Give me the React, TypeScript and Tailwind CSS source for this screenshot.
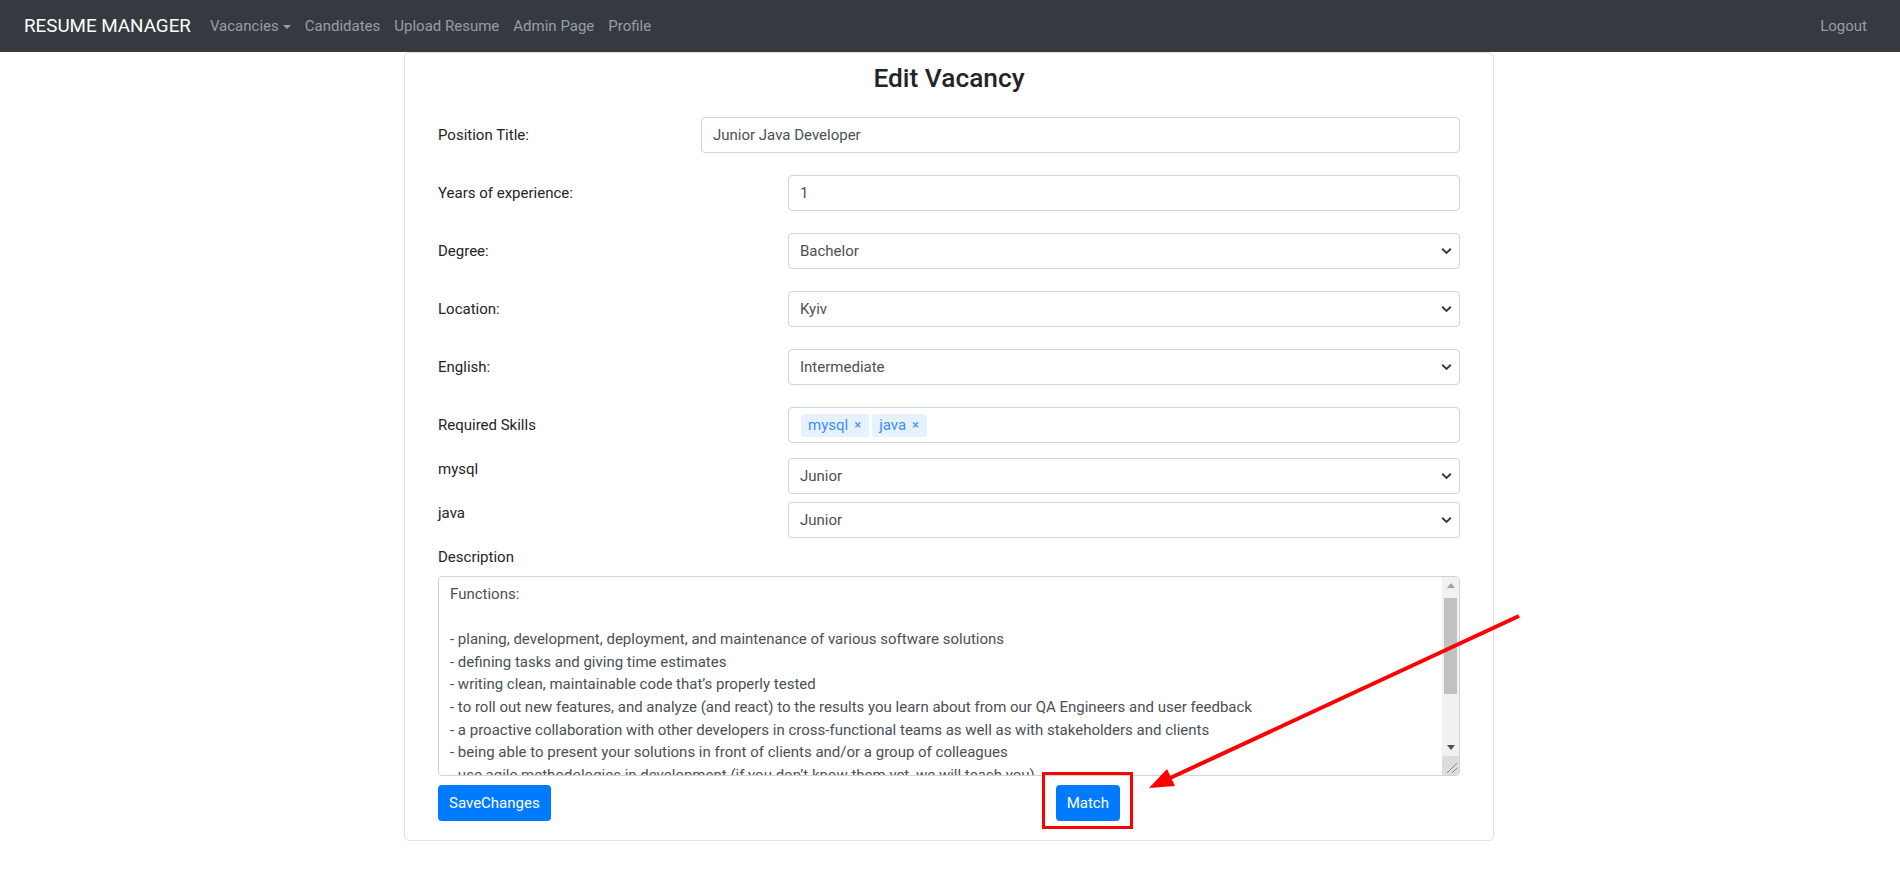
import React from "react";

const FONT = "font-['Roboto','Liberation_Sans',sans-serif]";

const DESCRIPTION = [
  "Functions:",
  "",
  "- planing, development, deployment, and maintenance of various software solutions",
  "- defining tasks and giving time estimates",
  "- writing clean, maintainable code that’s properly tested",
  "- to roll out new features, and analyze (and react) to the results you learn about from our QA Engineers and user feedback",
  "- a proactive collaboration with other developers in cross-functional teams as well as with stakeholders and clients",
  "- being able to present your solutions in front of clients and/or a group of colleagues",
  "- use agile methodologies in development (if you don’t know them yet, we will teach you)",
];

function Chevron() {
  return (
    <svg width="11" height="7" viewBox="0 0 11 7" className="absolute right-[7px] top-1/2 -translate-y-1/2">
      <path d="M1.2 1.2 L5.5 5.4 L9.8 1.2" fill="none" stroke="#343a40" strokeWidth="2" />
    </svg>
  );
}

function TextBox({ value, select }: { value: string; select?: boolean }) {
  return (
    <div className="relative flex-1 h-[36px] border border-[#ced4da] rounded-[4px] bg-white flex items-center pl-[11px] text-[#495057]">
      {value}
      {select && <Chevron />}
    </div>
  );
}

function Row({
  label,
  labelW,
  children,
  top,
  className = "",
}: {
  label: string;
  labelW: string;
  children: React.ReactNode;
  top?: boolean;
  className?: string;
}) {
  return (
    <div className={`flex ${top ? "items-start" : "items-center"} ${className}`}>
      <div className={`${labelW} shrink-0 text-[#212529] ${top ? "leading-[22px]" : ""}`}>{label}</div>
      {children}
    </div>
  );
}

function Tag({ name }: { name: string }) {
  return (
    <span className="h-[23px] flex items-center gap-[6px] pl-[7px] pr-[8px] rounded-[3px] bg-[#e6f2ff] text-[#3a8ef6]">
      {name}
      <span className="text-[13px]">×</span>
    </span>
  );
}

function ScrollBar() {
  return (
    <div className="w-[17px] flex flex-col bg-[#f1f1f1] shrink-0">
      <div className="h-[17px] flex items-center justify-center">
        <svg width="8" height="5" viewBox="0 0 8 5"><path d="M0 5 L4 0 L8 5 Z" fill="#a3a3a3" /></svg>
      </div>
      <div className="h-[96px] mx-[2px] mt-[4px] bg-[#c1c1c1]" />
      <div className="flex-1" />
      <div className="h-[17px] flex items-center justify-center">
        <svg width="8" height="5" viewBox="0 0 8 5"><path d="M0 0 L8 0 L4 5 Z" fill="#505050" /></svg>
      </div>
      <div className="h-[19px] bg-[#dcdcdc] relative">
        <svg width="17" height="19" viewBox="0 0 17 19" className="absolute inset-0">
          <path d="M5 17 L15 7 M10 17 L15 12" stroke="#8a8a8a" strokeWidth="1" />
        </svg>
      </div>
    </div>
  );
}

export default function App() {
  return (
    <div className={`relative min-h-[879px] bg-white text-[15px] ${FONT}`}>
      {/* Navbar */}
      <nav className="h-[52px] bg-[#343a40] flex items-center pl-[24px] pr-[26px]">
        <span className="text-[18.8px] text-white mr-[12px]">RESUME MANAGER</span>
        <div className="flex items-center text-[#9a9da0]">
          <span className="px-[7px] flex items-center">
            Vacancies
            <span className="ml-[4px] mt-[1px] w-0 h-0 border-l-[4.25px] border-r-[4.25px] border-t-[4.5px] border-l-transparent border-r-transparent border-t-[#9a9da0]" />
          </span>
          <span className="px-[7px]">Candidates</span>
          <span className="px-[7px]">Upload Resume</span>
          <span className="px-[7px]">Admin Page</span>
          <span className="px-[7px]">Profile</span>
        </div>
        <span className="ml-auto px-[7px] text-[#9a9da0]">Logout</span>
      </nav>

      {/* Card */}
      <div className="ml-[404px] w-[1090px] border border-[#dfe1e4] rounded-[5px] px-[33px] pt-[9px] pb-[19px]">
        <h3 className="text-center text-[26.3px] leading-[32px] font-medium text-[#212529]">Edit Vacancy</h3>

        <div className="mt-[23px] flex flex-col gap-[22px]">
          <Row label="Position Title:" labelW="w-[263px]">
            <TextBox value="Junior Java Developer" />
          </Row>
          <Row label="Years of experience:" labelW="w-[350px]">
            <TextBox value="1" />
          </Row>
          <Row label="Degree:" labelW="w-[350px]">
            <TextBox value="Bachelor" select />
          </Row>
          <Row label="Location:" labelW="w-[350px]">
            <TextBox value="Kyiv" select />
          </Row>
          <Row label="English:" labelW="w-[350px]">
            <TextBox value="Intermediate" select />
          </Row>
          <Row label="Required Skills" labelW="w-[350px]">
            <div className="flex-1 h-[36px] border border-[#ced4da] rounded-[4px] flex items-center gap-[3px] pl-[12px]">
              <Tag name="mysql" />
              <Tag name="java" />
            </div>
          </Row>
        </div>

        <Row label="mysql" labelW="w-[350px]" top className="mt-[15px]">
          <TextBox value="Junior" select />
        </Row>
        <Row label="java" labelW="w-[350px]" top className="mt-[8px]">
          <TextBox value="Junior" select />
        </Row>

        <div className="mt-[8px] leading-[22px] text-[#212529]">Description</div>
        <div className="mt-[8px] h-[200px] border border-[#ced4da] rounded-[4px] flex overflow-hidden">
          <div className="flex-1 pl-[11px] pt-[6px] text-[#495057] leading-[22.6px] overflow-hidden">
            {DESCRIPTION.map((line, i) => (
              <div key={i} className="h-[22.6px] whitespace-nowrap">{line}</div>
            ))}
          </div>
          <ScrollBar />
        </div>

        <div className="mt-[9px] flex items-center">
          <button className="h-[36px] px-[11px] rounded-[4px] bg-[#007bff] text-white">SaveChanges</button>
          <div className="relative ml-[505px]">
            <button className="h-[36px] px-[11px] rounded-[4px] bg-[#007bff] text-white">Match</button>
            <div className="absolute left-[-14px] top-[-13px] w-[91px] h-[57px] border-[3px] border-[#ff0000]" />
          </div>
        </div>
      </div>

      {/* Annotation arrow */}
      <svg className="absolute left-0 top-0 pointer-events-none" width="1900" height="879">
        <line x1="1519" y1="616" x2="1168" y2="779" stroke="#ff0000" strokeWidth="4" />
        <polygon points="1149,788 1167,769 1175,786" fill="#ff0000" />
      </svg>
    </div>
  );
}
